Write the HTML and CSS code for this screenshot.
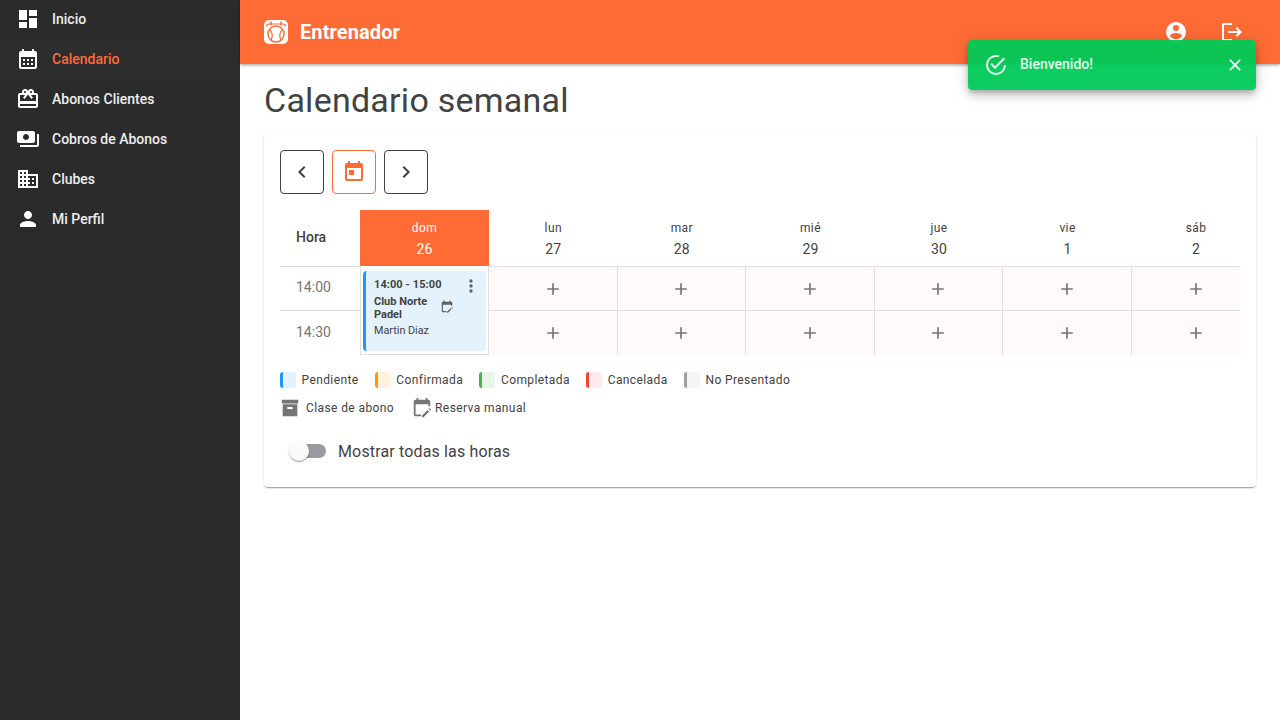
FILE: index.html
```html
<!DOCTYPE html>
<html lang="es">
<head>
<meta charset="utf-8">
<title>Calendario semanal</title>
<link rel="stylesheet" href="styles.css">
</head>
<body>
<svg class="sprite" aria-hidden="true">
  <symbol id="plus" viewBox="0 0 24 24"><path d="M19 13h-6v6h-2v-6H5v-2h6V5h2v6h6v2z"/></symbol>
  <symbol id="cal-edit" viewBox="0 0 24 24"><path d="M5 21c-1.1 0-2-.9-2-2V5c0-1.1.9-2 2-2h1V1h2v2h8V1h2v2h1c1.1 0 2 .9 2 2v5h-2V8H5v11h6v2H5z"/><path d="M21.7 13.35l-1-1c-.2-.2-.5-.2-.7 0l-.8.8 1.7 1.7.8-.8c.2-.2.2-.5 0-.7zM12 20.3V22h1.7l6.1-6.1-1.7-1.7L12 20.3z"/></symbol>
</svg>
<div class="app">
  <aside class="sidebar">
    <a class="nav-item"><svg class="nav-icon" viewBox="0 0 24 24"><path d="M3 13h8V3H3v10zm0 8h8v-6H3v6zm10 0h8V11h-8v10zm0-18v6h8V3h-8z"/></svg><span>Inicio</span></a>
    <a class="nav-item active"><svg class="nav-icon" viewBox="0 0 24 24"><path d="M19 4h-1V2h-2v2H8V2H6v2H5c-1.11 0-1.99.9-1.99 2L3 20c0 1.1.89 2 2 2h14c1.1 0 2-.9 2-2V6c0-1.1-.9-2-2-2zm0 16H5V10h14v10zM9 14H7v-2h2v2zm4 0h-2v-2h2v2zm4 0h-2v-2h2v2zm-8 4H7v-2h2v2zm4 0h-2v-2h2v2zm4 0h-2v-2h2v2z"/></svg><span>Calendario</span></a>
    <a class="nav-item"><svg class="nav-icon" viewBox="0 0 24 24"><path d="M20 6h-2.18c.11-.31.18-.65.18-1 0-1.66-1.34-3-3-3-1.05 0-1.96.54-2.5 1.35l-.5.67-.5-.68C10.96 2.54 10.05 2 9 2 7.34 2 6 3.34 6 5c0 .35.07.69.18 1H4c-1.11 0-1.99.89-1.99 2L2 19c0 1.11.89 2 2 2h16c1.11 0 2-.89 2-2V8c0-1.11-.89-2-2-2zm-5-2c.55 0 1 .45 1 1s-.45 1-1 1-1-.45-1-1 .45-1 1-1zM9 4c.55 0 1 .45 1 1s-.45 1-1 1-1-.45-1-1 .45-1 1-1zm11 15H4v-2h16v2zm0-5H4V8h5.08L7 10.83 8.62 12 11 8.76l1-1.36 1 1.36L15.38 12 17 10.83 14.92 8H20v6z"/></svg><span>Abonos Clientes</span></a>
    <a class="nav-item"><svg class="nav-icon" viewBox="0 0 24 24"><path d="M19 14V6c0-1.1-.9-2-2-2H3c-1.1 0-2 .9-2 2v8c0 1.1.9 2 2 2h14c1.1 0 2-.9 2-2zm-9-1c-1.66 0-3-1.34-3-3s1.34-3 3-3 3 1.34 3 3-1.34 3-3 3zm13-6v11c0 1.1-.9 2-2 2H4v-2h17V7h2z"/></svg><span>Cobros de Abonos</span></a>
    <a class="nav-item"><svg class="nav-icon" viewBox="0 0 24 24"><path d="M12 7V3H2v18h20V7H12zM6 19H4v-2h2v2zm0-4H4v-2h2v2zm0-4H4V9h2v2zm0-4H4V5h2v2zm4 12H8v-2h2v2zm0-4H8v-2h2v2zm0-4H8V9h2v2zm0-4H8V5h2v2zm10 12h-8v-2h2v-2h-2v-2h2v-2h-2V9h8v10zm-2-8h-2v2h2v-2zm0 4h-2v2h2v-2z"/></svg><span>Clubes</span></a>
    <a class="nav-item"><svg class="nav-icon" viewBox="0 0 24 24"><path d="M12 12c2.21 0 4-1.79 4-4s-1.79-4-4-4-4 1.79-4 4 1.79 4 4 4zm0 2c-2.67 0-8 1.34-8 4v2h16v-2c0-2.66-5.33-4-8-4z"/></svg><span>Mi Perfil</span></a>
  </aside>

  <div class="main">
    <header class="topbar">
      <div class="brand">
        <svg class="logo" viewBox="0 0 24 24">
          <rect width="24" height="24" rx="5" fill="#fff"/>
          <path d="M2.5 6.5C2.5 4.5 4 4 5 4h14c1 0 2.5.5 2.5 2.5" fill="none" stroke="#ff6b35" stroke-width="1.2"/>
          <path d="M7 1.5v4M17 1.5v4" stroke="#ff6b35" stroke-width="1.6"/>
          <circle cx="12" cy="14" r="8" fill="none" stroke="#ff6b35" stroke-width="1.4"/>
          <path d="M5.5 9.5c3 2.5 3.5 7 1.5 11M18.5 9.5c-3 2.5-3.5 7-1.5 11" fill="none" stroke="#ff6b35" stroke-width="1.4"/>
        </svg>
        <span class="brand-name">Entrenador</span>
      </div>
      <div class="top-actions">
        <svg class="top-icon" viewBox="0 0 24 24"><path d="M12 19.2C9.5 19.2 7.29 17.92 6 16C6.03 14 10 12.9 12 12.9C14 12.9 17.97 14 18 16C16.71 17.92 14.5 19.2 12 19.2M12 5A3 3 0 0 1 15 8A3 3 0 0 1 12 11A3 3 0 0 1 9 8A3 3 0 0 1 12 5M12 2A10 10 0 0 0 2 12A10 10 0 0 0 12 22A10 10 0 0 0 22 12A10 10 0 0 0 12 2Z"/></svg>
        <svg class="top-icon" viewBox="0 0 24 24"><path d="M17 7l-1.41 1.41L18.17 11H8v2h10.17l-2.58 2.58L17 17l5-5zM4 5h8V3H4c-1.1 0-2 .9-2 2v14c0 1.1.9 2 2 2h8v-2H4V5z"/></svg>
      </div>
    </header>

    <main class="content">
      <h1 class="page-title">Calendario semanal</h1>
      <section class="card">
        <div class="toolbar">
          <button class="tool-btn"><svg class="tool-icon" viewBox="0 0 24 24"><path d="M15.41 16.58L10.83 12l4.58-4.59L14 6l-6 6 6 6 1.41-1.42z"/></svg></button>
          <button class="tool-btn today"><svg class="today-icon" viewBox="0 0 24 24"><path d="M7 10H12V15H7M19 19H5V8H19M19 3H18V1H16V3H8V1H6V3H5C3.89 3 3 3.9 3 5V19A2 2 0 0 0 5 21H19A2 2 0 0 0 21 19V5A2 2 0 0 0 19 3Z"/></svg></button>
          <button class="tool-btn"><svg class="tool-icon" viewBox="0 0 24 24"><path d="M8.59 16.58L13.17 12 8.59 7.41 10 6l6 6-6 6-1.41-1.42z"/></svg></button>
        </div>

        <div class="calendar-clip">
          <div class="calendar">
            <div class="head-hour">Hora</div>
            <div class="head-day current"><span class="dow">dom</span><span class="dnum">26</span></div>
            <div class="head-day"><span class="dow">lun</span><span class="dnum">27</span></div>
            <div class="head-day"><span class="dow">mar</span><span class="dnum">28</span></div>
            <div class="head-day"><span class="dow">mié</span><span class="dnum">29</span></div>
            <div class="head-day"><span class="dow">jue</span><span class="dnum">30</span></div>
            <div class="head-day"><span class="dow">vie</span><span class="dnum">1</span></div>
            <div class="head-day"><span class="dow">sáb</span><span class="dnum">2</span></div>

            <div class="hour first">14:00</div>
            <div class="booked">
              <article class="event">
                <div class="event-body">
                  <div class="event-time">14:00 - 15:00</div>
                  <div class="event-club">Club Norte Padel</div>
                  <div class="event-name">Martin Diaz</div>
                </div>
                <svg class="event-dots" viewBox="0 0 24 24"><path d="M12 16a2 2 0 1 1 0 4 2 2 0 0 1 0-4zm0-6a2 2 0 1 1 0 4 2 2 0 0 1 0-4zm0-6a2 2 0 1 1 0 4 2 2 0 0 1 0-4z"/></svg>
                <svg class="event-cal"><use href="#cal-edit"/></svg>
              </article>
            </div>
            <div class="slot"><svg class="plus"><use href="#plus"/></svg></div>
            <div class="slot"><svg class="plus"><use href="#plus"/></svg></div>
            <div class="slot"><svg class="plus"><use href="#plus"/></svg></div>
            <div class="slot"><svg class="plus"><use href="#plus"/></svg></div>
            <div class="slot"><svg class="plus"><use href="#plus"/></svg></div>
            <div class="slot"><svg class="plus"><use href="#plus"/></svg></div>

            <div class="hour last">14:30</div>
            <div class="slot last"><svg class="plus"><use href="#plus"/></svg></div>
            <div class="slot last"><svg class="plus"><use href="#plus"/></svg></div>
            <div class="slot last"><svg class="plus"><use href="#plus"/></svg></div>
            <div class="slot last"><svg class="plus"><use href="#plus"/></svg></div>
            <div class="slot last"><svg class="plus"><use href="#plus"/></svg></div>
            <div class="slot last"><svg class="plus"><use href="#plus"/></svg></div>
          </div>
        </div>

        <div class="legend">
          <div class="legend-item"><i class="chip pending"></i>Pendiente</div>
          <div class="legend-item"><i class="chip confirmed"></i>Confirmada</div>
          <div class="legend-item"><i class="chip done"></i>Completada</div>
          <div class="legend-item"><i class="chip cancelled"></i>Cancelada</div>
          <div class="legend-item"><i class="chip absent"></i>No Presentado</div>
        </div>
        <div class="legend-icons">
          <div class="legend-icon-item"><svg class="legend-svg" viewBox="0 0 24 24"><path fill-rule="evenodd" d="M3 3h18v4H3zM4 8h16v13H4zM9.5 11a.5.5 0 0 0-.5.5V13h6v-1.5a.5.5 0 0 0-.5-.5z"/></svg>Clase de abono</div>
          <div class="legend-icon-item manual"><svg class="legend-svg"><use href="#cal-edit"/></svg>Reserva manual</div>
        </div>
        <label class="toggle-row">
          <span class="switch"><span class="track"></span><span class="thumb"></span></span>
          <span class="toggle-label">Mostrar todas las horas</span>
        </label>
      </section>
    </main>
  </div>

  <div class="toast">
    <svg class="toast-icon" viewBox="0 0 24 24"><path d="M20 12A8 8 0 0 1 12 20A8 8 0 0 1 4 12A8 8 0 0 1 12 4C12.76 4 13.5 4.11 14.2 4.31L15.77 2.74C14.61 2.26 13.34 2 12 2A10 10 0 0 0 2 12A10 10 0 0 0 12 22A10 10 0 0 0 22 12M7.91 10.08L6.5 11.5L11 16L21 6L19.59 4.58L11 13.17L7.91 10.08Z"/></svg>
    <span class="toast-text">Bienvenido!</span>
    <svg class="toast-close" viewBox="0 0 24 24"><path d="M19 6.41L17.59 5 12 10.59 6.41 5 5 6.41 10.59 12 5 17.59 6.41 19 12 13.41 17.59 19 19 17.59 13.41 12z"/></svg>
  </div>
</div>
</body>
</html>
```

FILE: styles.css
```css
* { box-sizing: border-box; }
html, body { margin: 0; height: 100%; }
body {
  font-family: Roboto, "Liberation Sans", sans-serif;
  color: #424242;
  background: #fff;
  overflow: hidden;
}
.sprite { display: none; }
.app { display: flex; height: 720px; position: relative; }

.sidebar { width: 240px; flex: none; background: #2b2b2b; }
.nav-item {
  display: flex;
  align-items: center;
  height: 40px;
  padding: 0 0 2px 16px;
  gap: 12px;
  font-size: 14px;
  font-weight: 500;
  color: #eeeeee;
}
.nav-icon { width: 24px; height: 24px; fill: #fff; flex: none; }
.nav-item.active { color: #ff6b35; background: #2d2d2d; }

.main { flex: 1; min-width: 0; display: flex; flex-direction: column; }
.topbar {
  height: 64px;
  flex: none;
  background: #ff6b35;
  display: flex;
  align-items: center;
  justify-content: space-between;
  padding: 0 36px 0 24px;
  box-shadow: 0 1px 3px rgba(0, 0, 0, .4);
  position: relative;
}
.brand { display: flex; align-items: center; gap: 12px; }
.logo { width: 24px; height: 24px; display: block; }
.brand-name { font-size: 20px; font-weight: 700; color: #fff; letter-spacing: .1px; }
.top-actions { display: flex; gap: 32px; }
.top-icon { width: 24px; height: 24px; fill: #fff; display: block; }

.content { padding: 16px 24px; }
.page-title {
  margin: 0 0 14px;
  font-size: 34px;
  line-height: 40px;
  font-weight: 400;
  letter-spacing: .0073em;
  color: #424242;
}
.card {
  background: #fff;
  border-radius: 4px;
  padding: 16px;
  height: 353px;
  box-shadow: 0 2px 1px -1px rgba(0, 0, 0, .2), 0 1px 1px 0 rgba(0, 0, 0, .14), 0 1px 3px 0 rgba(0, 0, 0, .12);
}
.toolbar { display: flex; gap: 8px; margin-bottom: 16px; }
.tool-btn {
  width: 44px;
  height: 44px;
  padding: 0;
  background: #fff;
  border: 1px solid #424242;
  border-radius: 4px;
  display: flex;
  align-items: center;
  justify-content: center;
}
.tool-btn.today { border-color: #ff6b35; }
.tool-icon { width: 24px; height: 24px; fill: #424242; }
.today-icon { width: 24px; height: 24px; fill: #ff6b35; }

.calendar-clip { overflow: hidden; }
.calendar {
  display: grid;
  width: 980px;
  grid-template-columns: 80px 129px repeat(6, 128.57px);
  grid-template-rows: 57px 44px 44px;
}
.head-hour {
  display: flex;
  align-items: center;
  padding: 0 0 2px 16px;
  font-size: 14px;
  font-weight: 500;
  border-bottom: 1px solid #e0e0e0;
}
.head-day {
  display: flex;
  flex-direction: column;
  align-items: center;
  padding-top: 10px;
  border-bottom: 1px solid #e0e0e0;
}
.head-day.current { background: #ff6b35; color: #fff; border-bottom: 0; height: 56px; }
.dow { font-size: 12px; line-height: 16px; letter-spacing: .0333em; }
.dnum { font-size: 14px; line-height: 20px; margin-top: 3px; letter-spacing: .01em; }
.hour {
  display: flex;
  align-items: center;
  padding: 0 0 2px 16px;
  font-size: 14px;
  color: #757575;
  border-bottom: 1px solid #e0e0e0;
}
.hour.first { padding-bottom: 4px; }
.hour.last { border-bottom: 0; }
.slot {
  display: flex;
  align-items: center;
  justify-content: center;
  background: #fff9f9;
  border-right: 1px solid #e0e0e0;
  border-bottom: 1px solid #e0e0e0;
}
.slot.last { border-bottom: 0; }
.plus { width: 20px; height: 20px; fill: #757575; }

.booked {
  grid-row: span 2;
  border: 1px solid #e0e0e0;
  border-top: 0;
  padding: 4px 2px 3px;
  background: #fff;
}
.event {
  position: relative;
  height: 80px;
  background: #e3f2fd;
  border-left: 3px solid #2196f3;
  border-radius: 4px;
  padding: 7px 8px;
  color: #424242;
}
.event-body { width: 68px; }
.event-time { font-size: 11px; line-height: 14px; font-weight: 700; white-space: nowrap; letter-spacing: .08px; }
.event-club { font-size: 11px; line-height: 13px; font-weight: 700; margin-top: 3px; }
.event-name { font-size: 10.8px; line-height: 14px; margin-top: 3px; white-space: nowrap; }
.event-dots { position: absolute; top: 5px; right: 5px; width: 20px; height: 20px; fill: #616161; }
.event-cal { position: absolute; top: 29px; left: 74px; width: 14px; height: 14px; fill: #616161; }

.legend { display: flex; gap: 16.3px; margin-top: 17px; height: 16px; }
.legend-item {
  display: flex;
  align-items: center;
  gap: 5.5px;
  font-size: 12px;
  letter-spacing: .0333em;
  color: #424242;
}
.chip { width: 16px; height: 16px; border-radius: 3px; border-left: 3px solid; display: block; }
.chip.pending { background: #e3f2fd; border-color: #2196f3; }
.chip.confirmed { background: #fff3e0; border-color: #ff9800; }
.chip.done { background: #e8f5e9; border-color: #4caf50; }
.chip.cancelled { background: #ffebee; border-color: #f44336; }
.chip.absent { background: #f5f5f5; border-color: #9e9e9e; }

.legend-icons { display: flex; gap: 17px; margin: 9px 0 0 -1px; height: 22px; }
.legend-icon-item {
  display: flex;
  align-items: center;
  gap: 5px;
  font-size: 12px;
  letter-spacing: .0333em;
  color: #424242;
}
.legend-svg { width: 22px; height: 22px; fill: #757575; flex: none; }
.legend-icon-item.manual { gap: 2px; }

.toggle-row { display: flex; align-items: center; gap: 12px; margin-top: 20px; padding-left: 9px; height: 24px; }
.switch { position: relative; width: 37px; height: 20px; display: block; }
.track {
  position: absolute;
  left: 5px;
  top: 3px;
  width: 32px;
  height: 14px;
  border-radius: 7px;
  background: #9a9a9f;
}
.thumb {
  position: absolute;
  left: 0;
  top: 0;
  width: 20px;
  height: 20px;
  border-radius: 50%;
  background: #fafafa;
  box-shadow: 0 2px 1px -1px rgba(0, 0, 0, .2), 0 1px 1px rgba(0, 0, 0, .14), 0 1px 3px rgba(0, 0, 0, .12);
}
.toggle-label { font-size: 16px; color: #424242; letter-spacing: .009375em; }

.toast {
  position: absolute;
  left: 968px;
  top: 40px;
  width: 288px;
  height: 50px;
  background: rgba(0, 202, 87, .95);
  border-radius: 4px;
  display: flex;
  align-items: center;
  padding: 0 11px 0 16px;
  box-shadow: 0 3px 5px -1px rgba(0, 0, 0, .2), 0 6px 10px 0 rgba(0, 0, 0, .14), 0 1px 18px 0 rgba(0, 0, 0, .12);
  color: #fff;
}
.toast-icon { width: 24px; height: 24px; fill: #e8fbef; flex: none; }
.toast-text { font-size: 14px; font-weight: 500; margin-left: 12px; flex: 1; color: #e8fbef; padding-bottom: 2px; }
.toast-close { width: 20px; height: 20px; fill: #fff; flex: none; }
```
